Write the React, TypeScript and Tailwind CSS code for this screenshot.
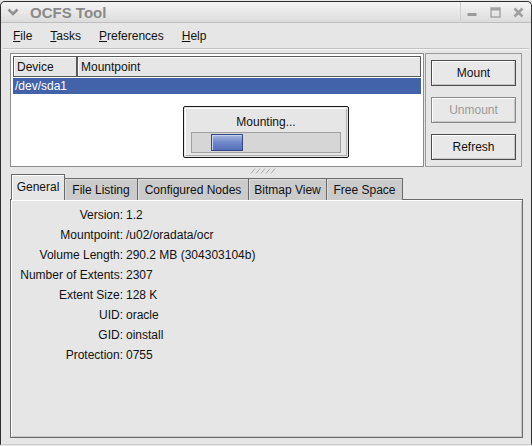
import React from "react";

const rows: [string, string][] = [
  ["Version:", "1.2"],
  ["Mountpoint:", "/u02/oradata/ocr"],
  ["Volume Length:", "290.2 MB (304303104b)"],
  ["Number of Extents:", "2307"],
  ["Extent Size:", "128 K"],
  ["UID:", "oracle"],
  ["GID:", "oinstall"],
  ["Protection:", "0755"],
];

function Btn({ label, disabled }: { label: string; disabled?: boolean }) {
  return (
    <div
      className={
        "w-[85px] h-[26px] border flex items-center justify-center bg-[#e8e8e8] shadow-[inset_1px_1px_0_#ffffff,inset_-1px_-1px_0_#c4c4c4] " +
        (disabled ? "border-[#8a8a8a] text-[#9a9a9a]" : "border-[#4a4a4a] text-[#111]")
      }
    >
      {label}
    </div>
  );
}

function Tab({ label, w, active }: { label: string; w: string; active?: boolean }) {
  if (active) {
    return (
      <div
        className={`${w} h-[26px] relative z-10 border-t border-l border-r border-[#6a6a6a] bg-[#e6e6e6] flex items-center justify-center pb-[2px] shadow-[inset_1px_1px_0_#ffffff]`}
      >
        {label}
      </div>
    );
  }
  return (
    <div
      className={`${w} h-[22px] border-t border-r border-[#6a6a6a] bg-[#cbcbcb] flex items-center justify-center shadow-[inset_1px_1px_0_#dedede]`}
    >
      {label}
    </div>
  );
}

export default function App() {
  return (
    <div className="w-[532px] h-[446px] overflow-hidden bg-[#e6e6e6] font-['Liberation_Sans',Arial,sans-serif] text-[12px] text-[#111]">
      <div className="w-[532px] h-[444px] mt-[1px] border-l border-r border-t border-b border-[#2e2e2e] border-b-[#cfcfcf] rounded-tl-[5px] rounded-tr-[5px] flex flex-col">
        {/* Title bar */}
        <div className="h-[21px] flex items-center bg-gradient-to-b from-[#f4f4f4] to-[#dcdcdc] border-b border-[#bdbdbd] rounded-tl-[5px] rounded-tr-[5px]">
          <svg width="12" height="10" viewBox="0 0 12 10" className="ml-[6px]">
            <path d="M1.5 2.5 L6 7 L10.5 2.5" stroke="#8f8f8f" strokeWidth="2.6" fill="none" />
          </svg>
          <span className="ml-[11px] text-[15px] font-bold text-[#8a8a8a] leading-none">OCFS Tool</span>
          <div className="flex-1" />
          <div className="h-[21px] border-l border-[#cfcfcf] mr-[6px]" />
          <svg width="10" height="10" viewBox="0 0 10 10" className="mr-[13px]">
            <rect x="0.5" y="6" width="9" height="3" fill="#9c9c9c" />
          </svg>
          <svg width="11" height="11" viewBox="0 0 11 11" className="mr-[12px]">
            <rect x="1" y="1" width="9" height="9" fill="none" stroke="#a3a3a3" strokeWidth="1.4" />
            <rect x="1" y="1" width="9" height="2.5" fill="#a3a3a3" />
          </svg>
          <svg width="11" height="11" viewBox="0 0 11 11" className="mr-[7px]">
            <path d="M1.5 1.5 L9.5 9.5 M9.5 1.5 L1.5 9.5" stroke="#a0a0a0" strokeWidth="2.6" />
          </svg>
        </div>

        {/* Menu bar */}
        <div className="h-[25px] flex items-center pl-[12px] gap-[18px] text-[12px]">
          <span><span className="underline">F</span>ile</span>
          <span><span className="underline">T</span>asks</span>
          <span><span className="underline">P</span>references</span>
          <span><span className="underline">H</span>elp</span>
        </div>
        <div className="h-[1px] bg-[#c2c2c2] mx-[2px]" />
        <div className="h-[1px] bg-[#f6f6f6] mx-[2px]" />

        {/* Upper pane */}
        <div className="ml-[9px] mt-[3px] w-[512px] h-[114px] flex">
          <div className="w-[414px] h-full border border-[#8c8c8c] bg-white relative p-[1px]">
            <div className="flex h-[21px] mt-[1px]">
              <div className="w-[64px] ml-[1px] border border-[#5a5a5a] bg-[#e6e6e6] flex items-center pl-[3px] shadow-[inset_1px_1px_0_#ffffff]">
                Device
              </div>
              <div className="flex-1 mr-[1px] border border-[#5a5a5a] bg-[#e6e6e6] flex items-center pl-[3px] shadow-[inset_1px_1px_0_#ffffff]">
                Mountpoint
              </div>
            </div>
            <div className="mt-[1px] mx-[1px] h-[16px] bg-[#4262a9] text-white flex items-center pl-[2px]">
              /dev/sda1
            </div>

            {/* Progress dialog */}
            <div className="absolute left-[172px] top-[52px] w-[166px] h-[52px] border border-[#1a1a1a] rounded-[2px] bg-[#e6e6e6] p-[1px]">
              <div className="w-full h-full border border-[#ffffff] border-r-[#b0b0b0] border-b-[#b0b0b0] flex flex-col items-center">
                <div className="h-[20px] mt-[3px] flex items-center">Mounting...</div>
                <div className="w-[150px] h-[21px] border border-[#a0a0a0] bg-[#d6d6d6] p-[1px]">
                  <div className="ml-[18px] w-[32px] h-full border border-[#334a86] bg-gradient-to-b from-[#a9b8e0] via-[#6f86c8] to-[#5670b8] shadow-[inset_1px_1px_0_#c8d2ee]" />
                </div>
              </div>
            </div>
          </div>
          <div className="flex-1 h-full border border-[#9a9a9a] ml-[1px] flex flex-col items-center pt-[6px] gap-[11px]">
            <Btn label="Mount" />
            <Btn label="Unmount" disabled />
            <Btn label="Refresh" />
          </div>
        </div>

        {/* Pane handle */}
        <div className="h-[8px] flex items-center justify-center pr-[6px]">
          <svg width="28" height="6" viewBox="0 0 28 6">
            {[0, 5, 10, 15, 20].map((x) => (
              <path key={x} d={`M${x + 2} 5.5 L${x + 6} 0.5`} stroke="#a8a8a8" strokeWidth="1" />
            ))}
          </svg>
        </div>

        {/* Tabs */}
        <div className="ml-[10px] flex items-end h-[25px] -mb-[1px] relative z-10">
          <Tab label="General" w="w-[54px]" active />
          <Tab label="File Listing" w="w-[73px]" />
          <Tab label="Configured Nodes" w="w-[111px]" />
          <Tab label="Bitmap View" w="w-[78px]" />
          <Tab label="Free Space" w="w-[76px]" />
        </div>

        {/* Panel */}
        <div className="ml-[9px] w-[513px] h-[239px] border border-[#6a6a6a] shadow-[inset_1px_1px_0_#ffffff,inset_-1px_-1px_0_#c8c8c8] pt-[5px]">
          {rows.map(([k, v]) => (
            <div key={k} className="flex h-[20px] items-center">
              <div className="w-[112px] text-right">{k}</div>
              <div className="pl-[3px]">{v}</div>
            </div>
          ))}
        </div>
      </div>
    </div>
  );
}
